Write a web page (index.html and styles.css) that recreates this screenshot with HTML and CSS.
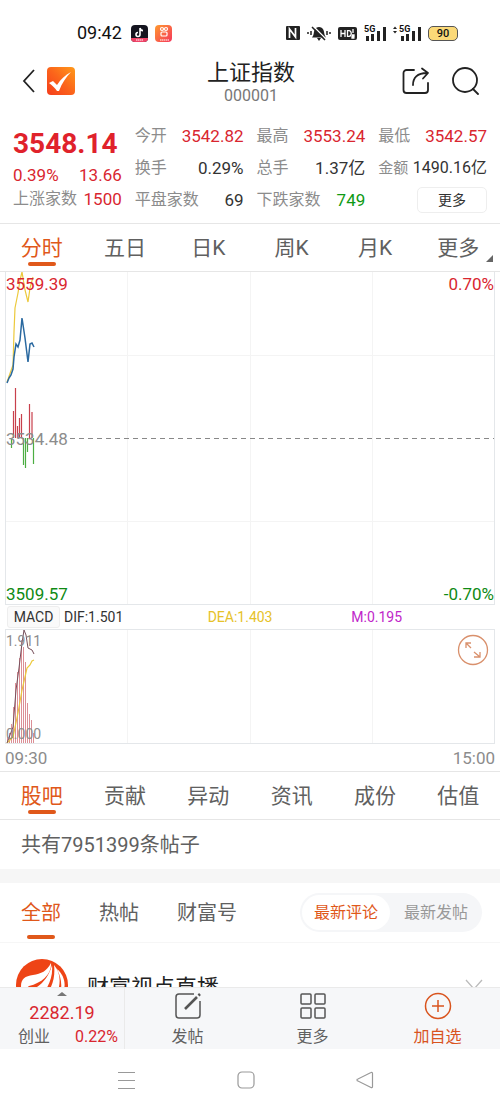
FILE: index.html
```
<!DOCTYPE html>
<html lang="zh-CN">

<head>
    <meta charset="UTF-8" />
    <meta name="viewport" content="width=device-width, initial-scale=1.0" />
    <title>上证指数 000001</title>
    <link rel="stylesheet" href="styles.css">
</head>

<body>
    <div class="status-bar">
        <span class="clock">09:42</span>
        <svg class="app-icon" width="17" height="17" viewBox="0 0 17 17">
            <rect width="17" height="17" rx="4" fill="#15151f" />
            <path d="M0 13h17a4 4 0 0 1-4 4H4a4 4 0 0 1-4-4z" fill="#f04468" />
            <path d="M9 3v6.500a2 2 0 1 1-2-2M9 3c.3 1.700 1.300 2.500 3 2.600" fill="none" stroke="#fff" stroke-width="1.600" />
            <path d="M5 15h7" stroke="#fff" stroke-width="1" stroke-dasharray="1.500 .5" />
        </svg>
        <svg class="app-icon" width="17" height="17" viewBox="0 0 17 17">
            <defs>
                <linearGradient id="kwai" x1="0" y1="0" x2="1" y2="1">
                    <stop offset="0" stop-color="#ff9a2e" />
                    <stop offset="1" stop-color="#f5365c" />
                </linearGradient>
            </defs>
            <rect width="17" height="17" rx="4" fill="url(#kwai)" />
            <g fill="none" stroke="#fff" stroke-width="1.200">
                <circle cx="7" cy="4" r="1.500" />
                <circle cx="11" cy="4" r="1.500" />
                <rect x="6" y="7" width="6" height="4" rx="1" />
                <path d="M5 15h9" stroke-dasharray="1.500 .5" />
            </g>
        </svg>
        <div class="status-right">
            <svg width="14" height="14" viewBox="0 0 14 14">
                <rect width="14" height="14" rx="1" fill="#222" />
                <path d="M3.500 12V3l6 8V2" fill="none" stroke="#fff" stroke-width="1.700" />
            </svg>
            <svg width="24" height="16" viewBox="0 0 24 16">
                <path d="M5 12.500c2-2 1.500-5 2.500-7.500 1.500-4 7.500-4 9 0 1 2.500.5 5.500 2.500 7.500zM10 13h4l-2 3z" fill="#222" />
                <path d="M6 1l14 14" stroke="#fff" stroke-width="1.500" />
                <path d="M5 2l13 13M1 7v2M4 6v4M20 6v4M23 7v2" stroke="#222" stroke-width="1.500" />
            </svg>
            <svg width="19" height="13" viewBox="0 0 19 13">
                <rect width="19" height="13" rx="2" fill="#222" />
                <path d="M3 3v7M7 3v7M3 6.500h4M9.500 3.700v5.600h1.500c3 0 3-5.600 0-5.600zM15 2v4M14 8h2v1.500h-2V11h2.500" fill="none" stroke="#fff" stroke-width="1.300" />
            </svg>
            <div class="signal">
                <span>5G</span>
                <svg width="22" height="15" viewBox="0 0 22 15">
                    <path d="M3.500 10v5M8.500 8v7M14.500 5v10M20.500 1v14" stroke="#222" stroke-width="3" />
                </svg>
            </div>
            <div class="signal second">
                <span>5G</span>
                <svg width="28" height="15" viewBox="0 0 28 15">
                    <path d="M0 3l2-2.500L4 3zM0 5l2 2.500L4 5z" fill="#222" />
                    <path d="M9.500 10v5M14.500 8v7M20.500 5v10M26.500 1v14" stroke="#222" stroke-width="3" />
                </svg>
            </div>
            <div class="battery">90</div>
        </div>
    </div>

    <header class="header">
        <div class="header-left">
            <button type="button" aria-label="返回">
                <svg width="14" height="24" viewBox="0 0 14 24">
                    <path d="M12 1L2 12l10 11" fill="none" stroke="#222" stroke-width="1.800" />
                </svg>
            </button>
            <svg width="28" height="28" viewBox="0 0 28 28">
                <defs>
                    <linearGradient id="logo" x1="1" y1="0" x2="0" y2="1">
                        <stop offset="0" stop-color="#ff9a1a" />
                        <stop offset="0.5" stop-color="#fb641b" />
                        <stop offset="1" stop-color="#f53d1c" />
                    </linearGradient>
                </defs>
                <rect width="28" height="28" rx="4" fill="url(#logo)" />
                <path d="M2 16l4-2 4 4C14 12 18 8 24 5c-5 5-9 11-12 19h-2C8 21 5 18 2 16z" fill="#fff" />
            </svg>
        </div>
        <div class="header-title">
            <h1>上证指数</h1>
            <p>000001</p>
        </div>
        <div class="header-right">
            <button type="button" aria-label="分享">
                <svg width="28" height="28" viewBox="0 0 28 28" fill="none" stroke="#222" stroke-width="1.800" stroke-linecap="round" stroke-linejoin="round">
                    <path d="M12 3H4.500a3 3 0 0 0-3 3v17a3 3 0 0 0 3 3H23a3 3 0 0 0 3-3v-7" />
                    <path d="M11 18c0-7 4-12 14-12M20 1.500L26 6l-5 5.500" />
                </svg>
            </button>
            <button type="button" aria-label="搜索">
                <svg width="28" height="28" viewBox="0 0 28 28" fill="none" stroke="#222" stroke-width="1.800" stroke-linecap="round">
                    <circle cx="13" cy="13" r="12" />
                    <path d="M21 22l5 5" />
                </svg>
            </button>
        </div>
    </header>

    <main class="content">
        <section class="quote">
            <div class="quote-main">
                <strong class="price">3548.14</strong>
                <div class="change"><span>0.39%</span><span>13.66</span></div>
                <div class="stat"><span>上涨家数</span><b class="up">1500</b></div>
            </div>
            <div class="quote-col">
                <div class="stat"><span>今开</span><b class="up">3542.82</b></div>
                <div class="stat"><span>换手</span><b>0.29%</b></div>
                <div class="stat"><span>平盘家数</span><b>69</b></div>
            </div>
            <div class="quote-col">
                <div class="stat"><span>最高</span><b class="up">3553.24</b></div>
                <div class="stat"><span>总手</span><b>1.37亿</b></div>
                <div class="stat"><span>下跌家数</span><b class="down">749</b></div>
            </div>
            <div class="quote-col">
                <div class="stat"><span>最低</span><b class="up">3542.57</b></div>
                <div class="stat small"><span>金额</span><b>1490.16亿</b></div>
                <button type="button" class="more-button">更多</button>
            </div>
        </section>

        <nav class="tabs">
            <button type="button" class="active">分时</button>
            <button type="button">五日</button>
            <button type="button">日K</button>
            <button type="button">周K</button>
            <button type="button">月K</button>
            <button type="button" class="has-menu">更多</button>
        </nav>

        <section class="charts">
            <div class="chart price-chart">
                <svg viewBox="0 0 488 332" preserveAspectRatio="none">
                    <path class="grid-line" d="M121.500 0v332M244.500 0v332M366.500 0v332M0 83.500h488M0 249.500h488" />
                    <path class="base-line" d="M64 166.500h424" />
                    <path class="bar-up" d="M7.500 166V139M9.500 166V116M11.500 166V154M13.500 166V146M15.500 166V142M23.500 166V132M26 166V140" />
                    <path class="bar-down" d="M5.500 166V176M17.500 166V193M19.500 166V196M21.500 166V180M27.500 166V192" />
                    <polyline class="line-avg" points="1,110 7,93 8,60 9,36 12,21 14,8 16,0 19,18 22,30 24,16 27,5" />
                    <polyline class="line-price" points="1,111 3,106 5,103 7,97 8,85 10,72 12,75 14,68 16,46 19,66 22,90 24,72 26,71 28,75" />
                </svg>
                <span class="label top-left up">3559.39</span>
                <span class="label top-right up">0.70%</span>
                <span class="label middle-left">3534.48</span>
                <span class="label bottom-left down">3509.57</span>
                <span class="label bottom-right down">-0.70%</span>
            </div>

            <div class="indicator">
                <button type="button">MACD</button>
                <span>DIF:1.501</span>
                <span class="dea">DEA:1.403</span>
                <span class="macd">M:0.195</span>
            </div>

            <div class="chart macd-chart">
                <svg viewBox="0 0 488 113" preserveAspectRatio="none">
                    <path class="grid-line" d="M121.500 0v113M244.500 0v113M366.500 0v113" />
                    <path class="bar-macd" d="M1.500 113V107M3.500 113V103M5.500 113V94M7.500 113V77M9.500 113V53M11.500 113V42M13.500 113V28M15.500 113V10M17.500 113V17M19.500 113V32M21.500 113V73M23.500 113V84M25.500 113V90M27.500 113V103" />
                    <polyline class="line-avg" points="1,113 7,107 12,83 16,60 21,38 24,35 26,31 28,30" />
                    <polyline class="line-dif" points="1,113 7,97 10,60 13,38 16,13 18,0 20,5 22,18 26,20 28,24" />
                </svg>
                <span class="label top-left">1.911</span>
                <span class="label bottom-left">0.000</span>
                <button type="button" class="expand" aria-label="全屏">
                    <svg width="32" height="32" viewBox="0 0 32 32" fill="none" stroke="#d9906c" stroke-width="1.300">
                        <circle cx="16" cy="16" r="14.500" />
                        <path d="M14 14L9 9M9 14V9h5M17 18l6 5M23 18v5h-6" />
                    </svg>
                </button>
            </div>

            <div class="time-axis"><span>09:30</span><span>15:00</span></div>
        </section>

        <nav class="tabs">
            <button type="button" class="active">股吧</button>
            <button type="button">贡献</button>
            <button type="button">异动</button>
            <button type="button">资讯</button>
            <button type="button">成份</button>
            <button type="button">估值</button>
        </nav>

        <p class="post-count">共有7951399条帖子</p>

        <div class="feed-bar">
            <nav class="feed-tabs">
                <button type="button" class="active">全部</button>
                <button type="button">热帖</button>
                <button type="button">财富号</button>
            </nav>
            <div class="sort">
                <button type="button" class="active">最新评论</button>
                <button type="button">最新发帖</button>
            </div>
        </div>

        <article class="post">
            <svg width="52" height="52" viewBox="0 0 52 52">
                <circle cx="26" cy="26" r="26" fill="#ee4416" />
                <path d="M5 27C5 20 9 17 17 16c8-1 14-4 18-12 1 11-9 20-22 23-2 1-3 4-3 8-3-2-5-5-5-8z" fill="#fff" />
                <path d="M17 30c8-3 16-12 19-24 1 10-2 18-7 26zM34 30c4-8 5-16 4-24 6 7 7 16 4 26zM45 30c1-7-1-14-4-20 6 5 9 13 7 20z" fill="#fff" />
            </svg>
            <h2>财富视点直播</h2>
            <svg width="18" height="12" viewBox="0 0 18 12">
                <path d="M1 1l8 9 8-9" fill="none" stroke="#bbb" stroke-width="1.300" />
            </svg>
        </article>
    </main>

    <footer class="bottom-bar">
        <a href="#" class="index-link">
            <strong>2282.19</strong>
            <span class="index-row"><span>创业</span><span class="up">0.22%</span></span>
        </a>
        <button type="button">
            <svg width="28" height="28" viewBox="0 0 28 28" fill="none" stroke="#555">
                <path d="M20 2H5a3 3 0 0 0-3 3v18a3 3 0 0 0 3 3h18a3 3 0 0 0 3-3V9" stroke-width="1.500" />
                <path d="M11 17L23 5M24.500 3.500l1.500-1.500" stroke-width="2.600" />
            </svg>
            发帖
        </button>
        <button type="button">
            <svg width="28" height="28" viewBox="0 0 28 28" fill="none" stroke="#555" stroke-width="1.500">
                <rect x="2" y="2" width="10" height="10" rx="1" />
                <rect x="16" y="2" width="10" height="10" rx="1" />
                <rect x="2" y="16" width="10" height="10" rx="1" />
                <rect x="16" y="16" width="10" height="10" rx="1" />
            </svg>
            更多
        </button>
        <button type="button" class="add">
            <svg width="28" height="28" viewBox="0 0 28 28" fill="none" stroke="#d9541e" stroke-width="1.500">
                <circle cx="14" cy="14" r="12.500" />
                <path d="M14 8v12M8 14h12" />
            </svg>
            加自选
        </button>
    </footer>

    <div class="system-nav">
        <button type="button" aria-label="菜单">
            <svg width="18" height="18" viewBox="0 0 18 18">
                <path d="M0 1.500h17M0 9.500h17M0 17.500h17" stroke="#999" stroke-width="1.200" />
            </svg>
        </button>
        <button type="button" aria-label="主页">
            <svg width="18" height="18" viewBox="0 0 18 18">
                <rect x="1" y="1" width="16" height="16" rx="4" fill="none" stroke="#999" stroke-width="1.200" />
            </svg>
        </button>
        <button type="button" aria-label="后退">
            <svg width="18" height="18" viewBox="0 0 18 18">
                <path d="M15 1.500L2 8a1 1 0 0 0 0 2l13 6.500a1 1 0 0 0 1.500-1V2.500a1 1 0 0 0-1.500-1z" fill="none" stroke="#999" stroke-width="1.200" />
            </svg>
        </button>
    </div>
</body>

</html>
```

FILE: styles.css
```
/* Base Styles */
* {
    box-sizing: border-box;
}

body {
    margin: 0;
    height: 100vh;
    display: flex;
    flex-direction: column;
    background-color: #fff;
    color: #333;
    font-family: Roboto, "Noto Sans CJK SC", sans-serif;
    font-size: 16px;
    line-height: 24px;
}

h1,
h2,
p {
    margin: 0;
    font-weight: 400;
}

button {
    padding: 0;
    border: none;
    background: none;
    color: inherit;
    font: inherit;
    cursor: pointer;
}

svg {
    display: block;
    flex-shrink: 0;
}

.up {
    color: #d9262f;
}

.down {
    color: #0f8a14;
}

/* Status bar */
.status-bar {
    display: flex;
    align-items: center;
    height: 56px;
    padding: 10px 42px 0 77px;
    color: #111;
}

.clock {
    margin-right: 9px;
    font-size: 18px;
}

.app-icon {
    margin-right: 7px;
}

.status-right {
    display: flex;
    align-items: center;
    gap: 7px;
    margin-left: auto;
}

.signal {
    position: relative;
}

.signal span {
    position: absolute;
    top: -3px;
    left: 0;
    font-size: 9px;
    line-height: 12px;
    font-weight: 700;
}

.signal.second span {
    left: 6px;
}

.battery {
    width: 30px;
    height: 15px;
    border: 1px solid #555;
    border-radius: 5px;
    background-color: #fbd978;
    font-size: 11px;
    line-height: 13px;
    font-weight: 500;
    text-align: center;
}

/* Header */
.header {
    display: grid;
    grid-template-columns: 1fr auto 1fr;
    align-items: center;
    height: 62px;
    padding: 0 20px 12px 22px;
}

.header-left {
    display: flex;
    align-items: center;
    gap: 11px;
}

.header-title {
    padding-top: 4px;
    text-align: center;
}

.header-title h1 {
    color: #222;
    font-size: 22px;
    line-height: 26px;
}

.header-title p {
    color: #777;
    line-height: 20px;
}

.header-right {
    display: flex;
    justify-content: flex-end;
    gap: 22px;
}

/* Main content scrolls under the bottom bar */
.content {
    flex: 1;
    min-height: 0;
    overflow-y: auto;
    scrollbar-width: none;
}

/* Quote */
.quote {
    display: grid;
    grid-template-columns: repeat(4, 1fr);
    gap: 13px;
    height: 106px;
    padding: 0 13px;
    border-bottom: 1px solid #e6e6e6;
}

.quote-main {
    padding-top: 6px;
}

.price {
    display: block;
    color: #e0222b;
    font-size: 28px;
    line-height: 40px;
}

.change {
    display: flex;
    justify-content: space-between;
    color: #d9262f;
    font-size: 17px;
    line-height: 23px;
}

.quote-col {
    display: grid;
    grid-template-rows: repeat(3, 32px);
    align-items: center;
    padding-top: 2px;
}

.stat {
    display: flex;
    justify-content: space-between;
    align-items: center;
    color: #8c8c8c;
    white-space: nowrap;
}

.stat b {
    color: #333;
    font-size: 17px;
    font-weight: 400;
}

.stat b.up {
    color: #d9262f;
}

.stat b.down {
    color: #0f9a14;
}

.stat.small {
    font-size: 15px;
}

.stat.small b {
    font-size: 16px;
}

.more-button {
    justify-self: end;
    width: 70px;
    height: 26px;
    border: 1px solid #eee;
    border-radius: 5px;
    font-size: 14px;
}

/* Tabs */
.tabs {
    display: grid;
    grid-template-columns: repeat(6, 1fr);
    height: 48px;
    border-bottom: 1px solid #e6e6e6;
}

.tabs button,
.feed-tabs button {
    position: relative;
    color: #606060;
    font-size: 21px;
}

.tabs .active,
.feed-tabs .active {
    color: #e0581a;
}

.tabs .active::after,
.feed-tabs .active::after {
    content: "";
    position: absolute;
    bottom: 5px;
    left: 50%;
    width: 28px;
    height: 4px;
    margin-left: -14px;
    border-radius: 2px;
    background-color: #e0581a;
}

.has-menu::after {
    content: "";
    position: absolute;
    right: 7px;
    bottom: 9px;
    border-left: 7px solid transparent;
    border-bottom: 7px solid #666;
}

/* Charts */
.charts {
    padding: 0 5px;
    border-bottom: 1px solid #e6e6e6;
}

.chart {
    position: relative;
    border: 1px solid #e4e7ea;
}

.chart > svg {
    width: 100%;
    height: 100%;
    fill: none;
}

.price-chart {
    height: 333px;
    border-top: none;
}

.macd-chart {
    height: 115px;
}

.chart path,
.chart polyline {
    vector-effect: non-scaling-stroke;
}

.grid-line {
    stroke: #f4f4f4;
}

.base-line {
    stroke: #888;
    stroke-dasharray: 5 4;
}

.bar-up {
    stroke: #c8404c;
    stroke-width: 1.2;
}

.bar-down {
    stroke: #4cae42;
    stroke-width: 1.2;
}

.bar-macd {
    stroke: #dc8f96;
}

.line-avg {
    stroke: #ecc93c;
    stroke-width: 1.2;
}

.line-price {
    stroke: #2a69a0;
    stroke-width: 1.5;
}

.line-dif {
    stroke: #77505c;
}

.label {
    position: absolute;
    color: #8c8c8c;
    font-size: 17px;
    line-height: 20px;
}

.label.up {
    color: #d9262f;
}

.label.down {
    color: #0f8a14;
}

.top-left {
    top: 2px;
    left: 0;
}

.top-right {
    top: 2px;
    right: 0;
}

.middle-left {
    top: 50%;
    left: 0;
    margin-top: -9px;
}

.bottom-left {
    bottom: 0;
    left: 0;
}

.bottom-right {
    right: 0;
    bottom: 0;
}

.macd-chart .label {
    font-size: 14px;
    line-height: 18px;
}

.expand {
    position: absolute;
    top: 4px;
    right: 5px;
}

.indicator {
    display: grid;
    grid-template-columns: 57px repeat(3, 1fr);
    align-items: center;
    height: 24px;
    padding-left: 2px;
    font-size: 14px;
    line-height: 22px;
}

.indicator button {
    width: 53px;
    height: 22px;
    border: 1px solid #eee;
    border-radius: 3px;
    background-color: #fafafa;
    line-height: 18px;
}

.dea {
    color: #e6c229;
}

.macd {
    color: #c026c9;
}

.time-axis {
    display: flex;
    justify-content: space-between;
    height: 27px;
    color: #8c8c8c;
    font-size: 17px;
    line-height: 28px;
}

/* Posts */
.post-count {
    height: 63px;
    padding-left: 21px;
    border-bottom: 14px solid #f6f6f6;
    color: #606060;
    font-size: 20px;
    line-height: 50px;
}

.feed-bar {
    display: flex;
    justify-content: space-between;
    align-items: center;
    height: 60px;
    padding: 0 18px 0 21px;
    border-bottom: 1px solid #f6f6f6;
}

.feed-tabs {
    display: flex;
    gap: 38px;
    height: 100%;
}

.feed-tabs button {
    font-size: 20px;
}

.feed-tabs .active::after {
    bottom: 3px;
}

.sort {
    display: flex;
    gap: 2px;
    padding: 2px;
    border-radius: 20px;
    background-color: #f5f6f8;
    color: #999;
}

.sort button {
    height: 35px;
    padding: 0 12px;
    border-radius: 18px;
}

.sort .active {
    background-color: #fff;
    color: #e0581a;
}

.post {
    display: flex;
    align-items: center;
    padding: 16px 17px 16px 16px;
}

.post h2 {
    flex: 1;
    margin-left: 19px;
    padding-top: 6px;
    color: #222;
    font-size: 22px;
}

/* Bottom bar */
.bottom-bar {
    display: grid;
    grid-template-columns: repeat(4, 1fr);
    height: 62px;
    border-top: 1px solid #eaeaea;
    background-color: #f6f7f9;
    color: #606060;
}

.bottom-bar button {
    display: flex;
    flex-direction: column;
    align-items: center;
    justify-content: space-between;
    padding-top: 4px;
}

.bottom-bar .add {
    color: #d9541e;
}

.index-link {
    position: relative;
    padding-top: 13px;
    border-right: 1px solid #eaeaea;
    color: #606060;
    text-decoration: none;
}

.index-link::before {
    content: "";
    position: absolute;
    top: 4px;
    left: 50%;
    margin-left: -5px;
    border: 5px solid transparent;
    border-top: none;
    border-bottom: 4px solid #777;
}

.index-link strong {
    display: block;
    color: #d9262f;
    font-size: 18px;
    font-weight: 400;
    text-align: center;
}

.index-row {
    display: flex;
    justify-content: space-between;
    padding: 0 6px 0 18px;
}

.system-nav {
    display: flex;
    justify-content: center;
    align-items: center;
    gap: 101px;
    height: 62px;
    padding-right: 9px;
}
```
